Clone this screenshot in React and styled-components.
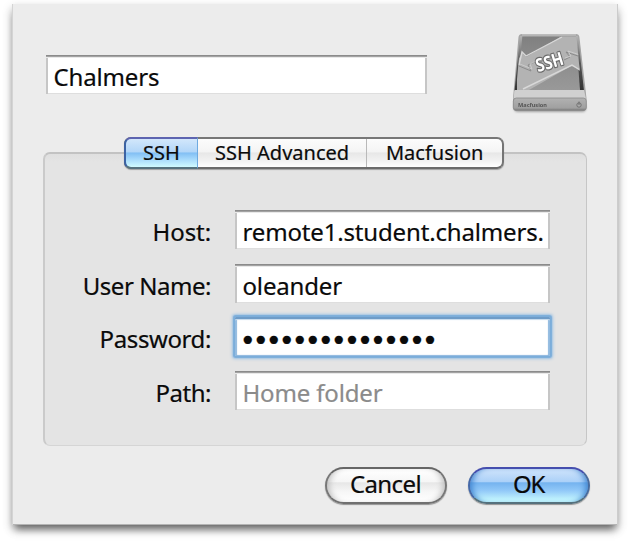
import React from "react";
import styled, { createGlobalStyle, css } from "styled-components";

const GlobalStyle = createGlobalStyle`
  * { box-sizing: border-box; }
  html { background: #fff; }
  body {
    margin: 0;
    color: #0a0a0a;
    font-family: "Noto Sans", "Open Sans", sans-serif;
    font-size: 24px;
    -webkit-text-stroke: 0.2px;
  }
`;

const Page = styled.div`
  height: 545px;
  padding: 4px 12px 0;
  overflow: hidden;
`;

const Sheet = styled.main`
  width: 606px;
  height: 521px;
  padding: 0 29px 0 31px;
  display: flex;
  flex-direction: column;
  background: #ececec;
  box-shadow: inset 1px 0 #d4d4d4, inset -1px 0 #cccccc, inset 0 -1px #b4b4b4,
    0 7px 8px -3px rgba(0, 0, 0, 0.5), 0 4px 9px rgba(0, 0, 0, 0.26);
`;

const Header = styled.header`
  display: flex;
  justify-content: space-between;
  height: 133px;
  padding: 51px 0 0 3px;
`;

const Field = styled.div`
  width: ${(p) => p.$width}px;
  height: 39px;
  padding: 4px 0 0 7.5px;
  line-height: 36px;
  letter-spacing: -0.16px;
  white-space: nowrap;
  overflow: hidden;
  color: ${(p) => (p.$placeholder ? "#8b8b8b" : "#0a0a0a")};
  background: #fff;
  box-shadow: inset 0 1px #8b8b8b, inset 0 2px #a3a3a3, inset 0 3px #e9e9e9,
    inset 2px 0 #c6c6c6, inset -2px 0 #c6c6c6, inset 0 -1px #dedede;
  ${(p) =>
    p.$focused &&
    css`
      border-radius: 1px;
      box-shadow: inset 0 2px #6e9cc8, inset 0 3px 1px #c5daed,
        inset 2px 0 1px #8db7de, inset -2px 0 1px #8db7de,
        inset 0 -1px 1px #8db7de, 0 0 1px 2px #7badda, 0 0 3px 3px #a3c5e4;
    `}
`;

const Bullets = styled.span`
  display: block;
  margin-left: -3px;
  line-height: 39px;
  font-family: "DejaVu Sans", sans-serif;
  font-size: 28px;
  letter-spacing: -3.5px;
`;

const DriveIcon = styled.svg`
  width: 90px;
  height: 90px;
  margin: -27px -6px 0 0;
  -webkit-text-stroke: 0;
`;

const Segments = styled.nav`
  z-index: 1;
  align-self: flex-start;
  display: flex;
  width: 380px;
  height: 32px;
  margin: 0 0 -17px 81px;
  border: 2px solid;
  border-color: #777 #747474 #6b6b6b #555;
  border-radius: 7px;
  background: linear-gradient(#fcfcfc, #f4f4f4 46%, #e7e7e7 50%, #f1f1f1 75%, #fff);
  box-shadow: 0 1px 1px rgba(0, 0, 0, 0.3);
`;

const Segment = styled.button`
  width: ${(p) => p.$width}px;
  height: ${(p) => (p.$active ? 32 : 28)}px;
  padding: 0;
  border: 0;
  border-right: ${(p) => (p.$last ? "0" : "1px solid #b9b9b9")};
  background: transparent;
  color: #0a0a0a;
  font: 20px/28px "Noto Sans", sans-serif;
  letter-spacing: 0;
  ${(p) =>
    p.$active &&
    css`
      margin: -2px 0 -2px -2px;
      border: 2px solid;
      border-color: #5d64b0 #6eaae0 #56727e #3c63a4;
      border-right-width: 1px;
      border-radius: 7px 0 0 7px;
      background: linear-gradient(#d2e7fb, #b2d6f8 46%, #82bff4 50%, #a3d7fb 70%, #d0fbff);
    `}
`;

const Panel = styled.section`
  width: 544px;
  height: 294px;
  padding-top: 56px;
  display: flex;
  flex-direction: column;
  gap: 14.5px;
  border: 1px solid;
  border-width: 2px 1px 1px 2px;
  border-color: #c2c2c2 #c6c6c6 #d5d5d5 #cacaca;
  border-radius: 7px;
  background: linear-gradient(#dfdfdf, #e4e4e4 8px);
`;

const Row = styled.div`
  display: grid;
  grid-template-columns: 166px 315px;
  column-gap: 24px;
`;

const Label = styled.label`
  height: 39px;
  padding-top: 4px;
  line-height: 35px;
  text-align: right;
  white-space: nowrap;
  letter-spacing: ${(p) => p.$spacing}px;
`;

const Actions = styled.footer`
  display: flex;
  justify-content: flex-end;
  gap: 21px;
  padding-top: 21px;
  margin-right: -1px;
`;

const PushButton = styled.button`
  width: 122px;
  height: 37px;
  padding: 0 1px 4px 0;
  border: 2px solid;
  border-color: ${(p) => (p.$primary ? "#454eae #486b9d #55707c #4569a8" : "#666 #777 #707070 #777")};
  border-radius: 19px;
  color: #0a0a0a;
  font: 24px/30px "Noto Sans", sans-serif;
  letter-spacing: ${(p) => (p.$primary ? "-1.4px" : "-0.6px")};
  background: ${(p) =>
    p.$primary
      ? "linear-gradient(#d0e4fb, #acd1f8 38%, #75b3ef 42%, #91c8f8 65%, #ceffff)"
      : "linear-gradient(#fff, #f6f6f6 38%, #e7e7e7 42%, #f7f7f7 70%, #fff)"};
  box-shadow: 0 1px 1px rgba(0, 0, 0, 0.38),
    ${(p) =>
      p.$primary
        ? "inset 6px 0 6px -4px #3d83cf, inset -6px 0 6px -4px #3d83cf"
        : "inset 6px 0 6px -4px #bcbcbc, inset -6px 0 6px -4px #bcbcbc"};
`;

const rows = [
  { label: "Host:", labelSpacing: -0.1, value: "remote1.student.chalmers." },
  { label: "User Name:", labelSpacing: -0.45, value: "oleander" },
  { label: "Password:", labelSpacing: -0.4, value: "•".repeat(15), secret: true },
  { label: "Path:", labelSpacing: -0.5, value: "Home folder", placeholder: true },
];

function SshDrive() {
  return (
    <DriveIcon viewBox="0 0 90 90" role="img" aria-label="SSH">
      <defs>
        <linearGradient id="face" x1="0" y1="0" x2="0" y2="1">
          <stop offset="0" stopColor="#808080" />
          <stop offset="1" stopColor="#999" />
        </linearGradient>
        <linearGradient id="rim" x1="0" y1="0" x2="0" y2="1">
          <stop offset="0" stopColor="#b5b5b5" />
          <stop offset="0.5" stopColor="#555" />
          <stop offset="1" stopColor="#333" />
        </linearGradient>
        <linearGradient id="front" x1="0" y1="0" x2="0" y2="1">
          <stop offset="0" stopColor="#b2b2b2" />
          <stop offset="0.8" stopColor="#a0a0a0" />
          <stop offset="1" stopColor="#757575" />
        </linearGradient>
        <clipPath id="top"><path d="M16 8.5H71.5L76.5 62H11Z" /></clipPath>
        <filter id="soft" x="-20%" y="-20%" width="140%" height="140%">
          <feGaussianBlur stdDeviation="1.3" />
        </filter>
        <filter id="edge"><feGaussianBlur stdDeviation="0.55" /></filter>
      </defs>
      <rect x="9" y="75" width="72" height="9" rx="4" fill="#777" opacity=".65" filter="url(#soft)" />
      <g filter="url(#edge)">
        <path d="M17 6H71Q74 6 74.4 9L81.5 70V79Q81.5 83 77 83H12.5Q8 83 8 79V70L13.5 9Q14 6 17 6Z" fill="#a5a5a5" />
        <path d="M15 8H73L79 63H9.5Z" fill="url(#rim)" />
        <path d="M17.3 8.5H71L75 62H12.5Z" fill="url(#face)" />
        <g clipPath="url(#top)">
          <path d="M57 8H76V42L66 38L24 62H12V34L17 25L21 29Z" fill="#b3b3b3" />
          <path d="M57 9L21 28L17 24L14 37M18 61L67 37L75 42L76 29" fill="none" stroke="#d8d8d8" strokeWidth="1.4" />
          <path d="M14 38L26 43L23 37L30 34M76 29L61 24L65 29L59 32" fill="none" stroke="#8b8b8b" strokeWidth="1" />
          <path d="M15 36L27 41L25 36L31 33M75 27L63 23L66 28L60 30" fill="none" stroke="#d0d0d0" strokeWidth="0.8" />
        </g>
        <path d="M9.5 62H79L81 71H8.5Z" fill="#d0d0d0" />
        <rect x="8.3" y="70" width="73" height="12.5" rx="3" fill="url(#front)" stroke="#8a8a8a" strokeWidth="0.8" />
        <path d="M17 6.8H71" stroke="#c5c5c5" strokeWidth="1.3" />
        <text x="44.5" y="40.5" textAnchor="middle" transform="rotate(-17 44.5 34)" textLength="28" lengthAdjust="spacingAndGlyphs" fontFamily="Noto Sans, sans-serif" fontSize="18.5" fontWeight="700" fill="#fff" stroke="#6b6b6b" strokeWidth="2.4" paintOrder="stroke" strokeLinejoin="round">SSH</text>
        <text x="13" y="79" textLength="29" lengthAdjust="spacingAndGlyphs" fontFamily="Noto Sans, sans-serif" fontSize="6" fontWeight="700" fill="#555">Macfusion</text>
        <circle cx="74" cy="77" r="2.2" fill="#aaa" stroke="#666" strokeWidth="0.8" />
        <path d="M74 73.5V77" stroke="#666" strokeWidth="0.8" />
      </g>
    </DriveIcon>
  );
}

export default function App() {
  return (
    <>
      <GlobalStyle />
      <Page>
        <Sheet>
          <Header>
            <Field $width={381}>Chalmers</Field>
            <SshDrive />
          </Header>
          <Segments>
            <Segment $width={74} $active>SSH</Segment>
            <Segment $width={170}>SSH Advanced</Segment>
            <Segment $width={135} $last>Macfusion</Segment>
          </Segments>
          <Panel>
            {rows.map((row) => (
              <Row key={row.label}>
                <Label $spacing={row.labelSpacing}>{row.label}</Label>
                <Field $width={315} $focused={row.secret} $placeholder={row.placeholder}>
                  {row.secret ? <Bullets>{row.value}</Bullets> : row.value}
                </Field>
              </Row>
            ))}
          </Panel>
          <Actions>
            <PushButton>Cancel</PushButton>
            <PushButton $primary>OK</PushButton>
          </Actions>
        </Sheet>
      </Page>
    </>
  );
}
